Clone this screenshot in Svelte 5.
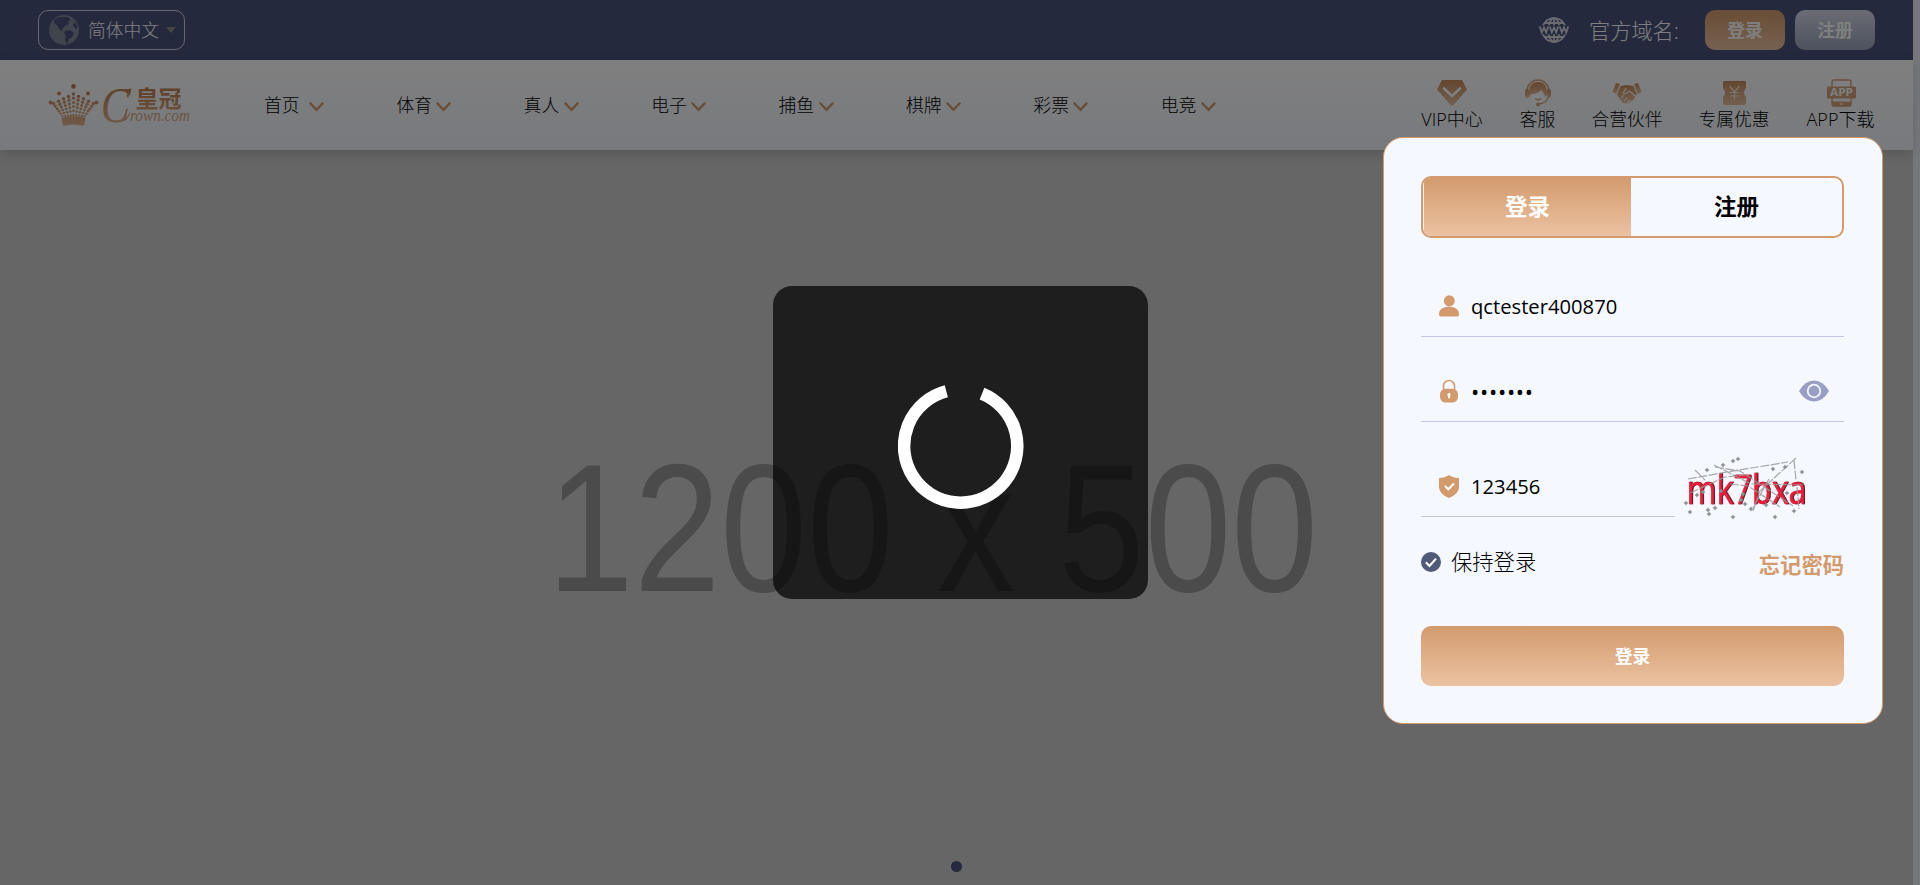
<script>
  const nav = ['首页', '体育', '真人', '电子', '捕鱼', '棋牌', '彩票', '电竞'];
  const links = [
    { label: 'VIP中心', icon: 'vip', w: 62 },
    { label: '客服', icon: 'service', w: 35 },
    { label: '合营伙伴', icon: 'partner', w: 70 },
    { label: '专属优惠', icon: 'offer', w: 70 },
    { label: 'APP下载', icon: 'app', w: 69 },
  ];

  const crownDots = [];
  for (let row = 0; row < 6; row++) {
    for (let i = -4; i <= 4; i++) {
      const spread = 5 - row * 0.45;
      crownDots.push({
        x: 25 + i * spread,
        y: 11 + row * 4.2 + Math.abs(i) * (2.4 - row * 0.42),
        r: 1.75 - row * 0.12,
      });
    }
  }

  const specks = [
    [48, 4], [53, 2], [38, 8], [22, 13], [100, 10], [117, 15], [88, 12], [12, 38],
    [18, 35], [36, 34], [58, 37], [60, 47], [56, 43], [23, 53], [24, 57], [30, 51],
    [5, 55], [81, 48], [109, 54], [48, 60], [90, 60], [1, 46], [102, 36], [66, 52],
  ];
</script>

<div class="page">
  <div class="content">
    <header class="topbar">
      <button class="lang">
        <svg width="30" height="30" viewBox="0 0 30 30">
          <circle cx="15" cy="15" r="15" fill="#80889b" />
          <path d="M5 5l5-3 9 0 3 3-3 1 1 3-4 2-3 3 2 2-4-1-3-5-3-2zM16 16l5-1 4 3-2 4-3 2-2 5-2-4 1-4-2-3zM26 7l3 5-2 2-3-4z" fill="#4a527c" />
        </svg>
        <span>简体中文</span>
        <i class="caret"></i>
      </button>
      <div class="account">
        <svg class="www" width="30" height="26" viewBox="0 0 30 26" fill="none" stroke="#d5d7df" stroke-width="1.8">
          <circle cx="15" cy="13" r="11.8" />
          <ellipse cx="15" cy="13" rx="5.6" ry="11.8" />
          <path d="M15 1v24M5.5 6h19M5.5 20h19" />
          <rect x="0" y="8.3" width="30" height="9" fill="#4a527c" stroke="none" />
          <path d="M.8 9.500l2 6 2.200-5 2.200 5 2-6M10.800 9.500l2 6 2.200-5 2.200 5 2-6M20.800 9.500l2 6 2.200-5 2.200 5 2-6" />
        </svg>
        <span class="domain">官方域名:</span>
        <button class="pill gold">登录</button>
        <button class="pill silver">注册</button>
      </div>
    </header>

    <div class="menubar">
      <svg class="logo" width="144" height="44" viewBox="0 0 144 44">
        <defs>
          <linearGradient id="brand" x1="0" y1="0" x2="0" y2="44" gradientUnits="userSpaceOnUse">
            <stop offset="0" stop-color="#b9794c" />
            <stop offset="1" stop-color="#e0b594" />
          </linearGradient>
        </defs>
        <g fill="url(#brand)">
          <circle cx="26.500" cy="3.400" r="2.300" />
          <circle cx="12" cy="10.500" r="2" /><circle cx="41" cy="10.500" r="2" />
          <circle cx="3.500" cy="19.500" r="1.900" /><circle cx="49.500" cy="19.500" r="1.900" />
          <g transform="translate(1.500 0)">
            {#each crownDots as d}
              <circle cx={d.x} cy={d.y} r={d.r} />
            {/each}
            <path d="M13 35q12-4 24 0l-1.700 8q-10.300-3-20.600 0z" />
          </g>
          <text class="brand-c" x="54" y="38.500" textLength="28" lengthAdjust="spacingAndGlyphs">C</text>
          <text class="brand-cn" x="88.500" y="24" textLength="46" lengthAdjust="spacingAndGlyphs">皇冠</text>
          <text class="brand-en" x="83" y="38" textLength="60" lengthAdjust="spacingAndGlyphs">rown.com</text>
          <path d="M82 12.500q-1-6-5-6.300 5 0 7.500-.700l-1.500 7z" />
          <path d="M73 37.500q4-1 6-11l1.800-1-2 9q2-1 4-5l.500.500q-2.500 6-5 7.500z" />
        </g>
      </svg>
      <nav>
        {#each nav as item, i}
          <a class:first={i === 0}>
            <span>{item}</span>
            <svg width="15" height="10" viewBox="0 0 15 10"><path d="M1.500 1.500L7.500 7.800L13.500 1.500" fill="none" stroke="#d39b6d" stroke-width="2.500" stroke-linecap="round" /></svg>
          </a>
        {/each}
      </nav>
      <div class="links">
        {#each links as l}
          <a style:width="{l.w}px">
            <svg width="30" height="28" viewBox="0 0 30 28">
              {#if l.icon === 'vip'}
                <path d="M5 1h20l5 9.500L16.500 26q-1.500 1.300-3 0L0 10.500z" fill="url(#ico)" />
                <path d="M7 9.500l8 7.500 8-7.500" fill="none" stroke="#fff" stroke-width="2.600" stroke-linecap="round" />
              {:else if l.icon === 'service'}
                <path d="M4 12a11 11 0 0 1 22 0" fill="none" stroke="#d3a27c" stroke-width="1.500" />
                <path d="M6 16q-1-13 9-13t9 13l-2 2q-1-5-4-7-3 4-10 4l-1 4z" fill="url(#ico)" />
                <rect x="2" y="10" width="4" height="9" rx="2" fill="url(#ico)" />
                <rect x="24" y="10" width="4" height="9" rx="2" fill="url(#ico)" />
                <path d="M7.500 16q7-1 10-4.500 3 2 4 6.500-1.500 5.500-6.500 5.500T7.500 16z" fill="#fff" fill-opacity=".75" />
                <path d="M25 18q-1 6-9 7M12 19.500q3 2.500 6 0" fill="none" stroke="#d3a27c" stroke-width="1.300" />
                <circle cx="15" cy="25.500" r="2" fill="#d3a27c" />
              {:else if l.icon === 'partner'}
                <path d="M4 4l4 1-4 10-3.500-2zM26 4l-4 1 4 10 3.500-2z" fill="url(#ico)" />
                <path d="M8.500 7l6.500-1 6.500 1 3.500 8-4 6-5 3.500-5-.500-6-8z" fill="url(#ico)" />
                <path d="M14 9l-3 5q3 2 6-2l7 5.500M9 19.500l3-3.500M12 22l3-3.500M15 24l3-3.500" fill="none" stroke="#fff" stroke-width="1.100" />
              {:else if l.icon === 'offer'}
                <path d="M5 2h21q1 0 1 2v5q-2 2-2 4.500t2 4.500v6q0 2-1.500 2H6q-2 0-2-2v-6q2-2 2-4.500T4 9V4q0-2 1-2z" fill="url(#ico)" />
                <path d="M10.500 7l5 6 5-6M15.500 13v7.500M11 13.500h9M11 17h9" fill="none" stroke="#f5e8dd" stroke-width="1.200" />
              {:else}
                <rect x="6" y="1" width="19" height="26" rx="2" fill="none" stroke="#d3a27c" stroke-width="1.500" />
                <path d="M6 22.500h19V26q0 1.500-2 1.500H8q-2 0-2-1.500z" fill="#d3a27c" />
                <rect x="1" y="7.500" width="29" height="12" rx="1" fill="#d3a27c" />
                <text class="app-text" x="4" y="17.200" textLength="23" lengthAdjust="spacingAndGlyphs">APP</text>
                <circle cx="15.500" cy="25" r="1" fill="#fff" />
              {/if}
            </svg>
            <span>{l.label}</span>
          </a>
        {/each}
      </div>
    </div>

    <main class="banner">
      <svg class="placeholder" width="760" height="140" viewBox="0 0 760 140">
        <text class="size-text" x="0" y="0" transform="translate(-11 127) scale(1 1.170)" textLength="771" lengthAdjust="spacingAndGlyphs">1200 x 500</text>
      </svg>
      <i class="dot"></i>
    </main>
  </div>
  <div class="scroll"></div>
</div>

<svg class="defs" width="0" height="0">
  <linearGradient id="ico" x1="0" y1="0" x2="0" y2="1">
    <stop offset="0" stop-color="#c88c5c" />
    <stop offset="1" stop-color="#e5c0a4" />
  </linearGradient>
</svg>

<div class="overlay"></div>

<div class="loader">
  <svg width="126" height="126" viewBox="0 0 126 126">
    <path d="M48.300 8.300A56.600 56.600 0 1 0 84 10.600" fill="none" stroke="#fff" stroke-width="12.500" />
  </svg>
</div>

<section class="modal">
  <div class="tabs">
    <button class="active">登录</button>
    <button>注册</button>
  </div>

  <div class="field user">
    <svg width="20" height="22" viewBox="0 0 20 22" fill="#d39b6d">
      <circle cx="10.300" cy="5.800" r="5.500" />
      <path d="M0 19q0-7 10-7.500Q20 12 20 19q0 2.600-2.500 2.600h-15Q0 21.600 0 19z" />
    </svg>
    <span>qctester400870</span>
  </div>

  <div class="field password">
    <svg width="20" height="24" viewBox="0 0 20 24">
      <path d="M4.500 11V7a5.500 5.500 0 0 1 11 0v4" fill="none" stroke="#d39b6d" stroke-width="1.600" />
      <rect x="1" y="9.800" width="18" height="13.700" rx="5.500" fill="#d39b6d" />
      <path d="M10 14a1.600 1.800 0 0 1 1 3.200v2H9v-2A1.600 1.800 0 0 1 10 14z" fill="#fff" />
    </svg>
    <span class="bullets">•••••••</span>
    <svg class="eye" width="30" height="22" viewBox="0 0 30 22">
      <path d="M0 11Q6 .500 15 .500T30 11Q24 21.500 15 21.500T0 11z" fill="#999fc3" />
      <circle cx="15" cy="11" r="6.300" fill="none" stroke="#f5f8ff" stroke-width="1.700" />
    </svg>
  </div>

  <div class="code-row">
    <div class="field code">
      <svg width="20" height="23" viewBox="0 0 20 23">
        <path d="M10 0q4 3 10 3v9q0 7-10 11Q0 19 0 12V3q6 0 10-3z" fill="#d39b6d" />
        <path d="M6 11l3.300 3.300L15 8.500" fill="none" stroke="#fff" stroke-width="2" />
      </svg>
      <span>123456</span>
    </div>
    <svg class="captcha" width="126" height="64" viewBox="0 0 126 64">
      <text class="captcha-text" x="1.500" y="46.500" textLength="120" lengthAdjust="spacingAndGlyphs">mk7bxa</text>
      <g fill="none" stroke="#999" stroke-width="1.200">
        <path d="M3 22L42 15L103 5M29 8L66 27L119 28M111 1L75 34L68 54M109 3L111 23M10 13L20 23M30 10L55 14L108 49M45 27L63 29L95 50M112 30L114 52M84 22L68 51M5 36L40 20L60 18" stroke-opacity=".85" stroke-dasharray="9 1.500" />
      </g>
      <g fill="#8f9290">
        {#each specks as [x, y]}
          <path d="M{x} {y - 2.5}l1 1.500 1.500 1-1.500 1-1 1.500-1-1.500-1.500-1 1.500-1z" />
        {/each}
      </g>
    </svg>
  </div>

  <div class="options">
    <label>
      <svg width="20" height="20" viewBox="0 0 20 20">
        <circle cx="10" cy="10" r="10" fill="#525a7a" />
        <path d="M4.800 10.300l3.700 3.700 6.500-7.300" fill="none" stroke="#fff" stroke-width="2" />
      </svg>
      <span>保持登录</span>
    </label>
    <a class="forgot">忘记密码</a>
  </div>

  <button class="submit">登录</button>
</section>

<style>
  :global(body) {
    margin: 0;
    overflow: hidden;
    font-family: 'Open Sans', 'Noto Sans CJK SC', sans-serif;
  }
  * { box-sizing: border-box; }
  button {
    border: 0;
    padding: 0 0 3px;
    background: none;
    font-family: inherit;
  }
  svg { display: block; flex: none; }
  .defs { position: absolute; }

  .page { display: flex; width: 1920px; height: 885px; background: #cdcdcd; }
  .content { display: flex; flex-direction: column; width: 1913px; }
  .scroll { width: 7px; background: #edeff6; }

  .topbar {
    display: flex;
    align-items: center;
    justify-content: space-between;
    height: 60px;
    padding: 0 38px;
    background: #4a527c;
  }
  .lang {
    display: flex;
    align-items: center;
    width: 147px;
    height: 40px;
    padding: 0 0 0 10px;
    border: 1px solid #cfd1df;
    border-radius: 10px;
    color: #fff;
    font-size: 17.8px;
    font-weight: 300;
  }
  .lang span { margin-left: 9px; padding-bottom: 3px; }
  .caret {
    margin-left: 7px;
    border: 5px solid transparent;
    border-top: 6px solid #8b8a85;
    border-bottom: 0;
  }
  .account { display: flex; align-items: center; color: #fff; }
  .www { margin-bottom: 1px; }
  .domain { width: 92px; margin: 0 24px 0 20px; padding-bottom: 2px; font-size: 21.2px; font-weight: 300; white-space: nowrap; }
  .pill {
    width: 80px;
    height: 40px;
    padding-bottom: 2px;
    border-radius: 10px;
    color: #fff;
    font-size: 17.8px;
    font-weight: 700;
  }
  .pill + .pill { margin-left: 10px; }
  .gold { background: linear-gradient(#d39b6d, #ebc2a2); }
  .silver { background: linear-gradient(#d5dae9, #9aa3bb); }

  .menubar {
    display: flex;
    position: relative;
    height: 90px;
    padding: 0 38px 0 47px;
    background: linear-gradient(#fff, #f1f4fc);
    box-shadow: 0 4px 12px rgba(0, 0, 0, 0.16);
    color: #000;
    font-size: 17.8px;
    font-weight: 300;
  }
  .logo { margin-top: 23px; overflow: visible; }
  .brand-c { font: italic 50px 'Liberation Serif', serif; }
  .brand-cn { font: 700 23px 'Noto Sans CJK SC', sans-serif; }
  .brand-en { font: italic 17px 'Liberation Serif', serif; }
  nav { display: flex; margin-left: 73px; }
  nav a { display: flex; align-items: center; gap: 4.5px; width: 127.4px; }
  nav a span { padding-bottom: 3px; }
  nav a.first { gap: 9.5px; width: 132.4px; }
  nav a svg { margin-top: 3px; }
  .links { display: flex; gap: 37px; margin-left: auto; padding-top: 19px; }
  .links a { display: flex; flex-direction: column; align-items: center; white-space: nowrap; }
  .links span { line-height: 24px; }
  .links a:first-child, .links a:last-child { font-size: 18px; }
  .app-text { font: 700 10px 'Open Sans', sans-serif; fill: #fff; }

  .banner {
    display: flex;
    flex: 1;
    flex-direction: column;
    align-items: center;
    justify-content: space-between;
    padding: 314px 0 13px;
  }
  .placeholder { margin-right: 37px; overflow: visible; }
  .size-text { font: 156px 'Liberation Sans', sans-serif; fill: #969696; }
  .dot { width: 11px; height: 11px; border-radius: 50%; background: #4a527c; }

  .overlay { position: absolute; inset: 0; background: rgba(0, 0, 0, 0.5); }
  .loader {
    position: absolute;
    left: 773px;
    top: 286px;
    display: flex;
    justify-content: center;
    width: 375px;
    height: 313px;
    padding: 97px 0 0 1px;
    border-radius: 19px;
    background: rgba(0, 0, 0, 0.7);
  }

  .modal {
    position: absolute;
    left: 1383px;
    top: 137px;
    display: flex;
    flex-direction: column;
    width: 500px;
    height: 587px;
    padding: 38px 38px 0 37px;
    border: 1px solid #d39b6d;
    border-radius: 20px;
    background: #f5f8ff;
  }
  .tabs {
    display: flex;
    height: 62px;
    padding-left: 1px;
    border: 2px solid #d39b6d;
    border-radius: 10px;
    overflow: hidden;
  }
  .tabs button { flex: 1; color: #000; font-size: 22.5px; font-weight: 700; }
  .tabs .active { flex: none; width: 207px; background: linear-gradient(#d39b6d, #ebc2a2); color: #fff; }
  .field {
    display: flex;
    align-items: center;
    height: 60px;
    padding: 0 0 1px 18px;
    border-bottom: 1px solid #c3c7e6;
    font-size: 20.2px;
  }
  .field span { margin-left: 12px; }
  .user { margin-top: 39px; }
  .password { margin-top: 25px; padding-right: 15px; }
  .field .bullets { font-size: 22px; letter-spacing: 0.7px; }
  .eye { margin-left: auto; }
  .code-row { display: flex; margin-top: 35px; }
  .code { width: 254px; }
  .captcha { margin-left: 10px; overflow: visible; }
  .captcha-text {
    font: 40px 'Open Sans', sans-serif;
    fill: #ee1c38;
    stroke: #ee1c38;
    stroke-width: 0.6;
    filter: drop-shadow(1.5px 0.5px 0 #3c1020);
  }
  .options { display: flex; align-items: center; justify-content: space-between; height: 24px; margin-top: 29px; }
  label { display: flex; align-items: center; gap: 10px; font-size: 21.3px; font-weight: 300; color: #000; }
  label span { padding-bottom: 4px; }
  .forgot { margin-top: 2px; color: #d39b6d; font-size: 21.3px; font-weight: 700; }
  .submit {
    height: 60px;
    margin-top: 52px;
    border-radius: 10px;
    background: linear-gradient(#d39b6d, #ebc2a2);
    color: #fff;
    font-size: 17.8px;
    font-weight: 700;
  }
</style>
